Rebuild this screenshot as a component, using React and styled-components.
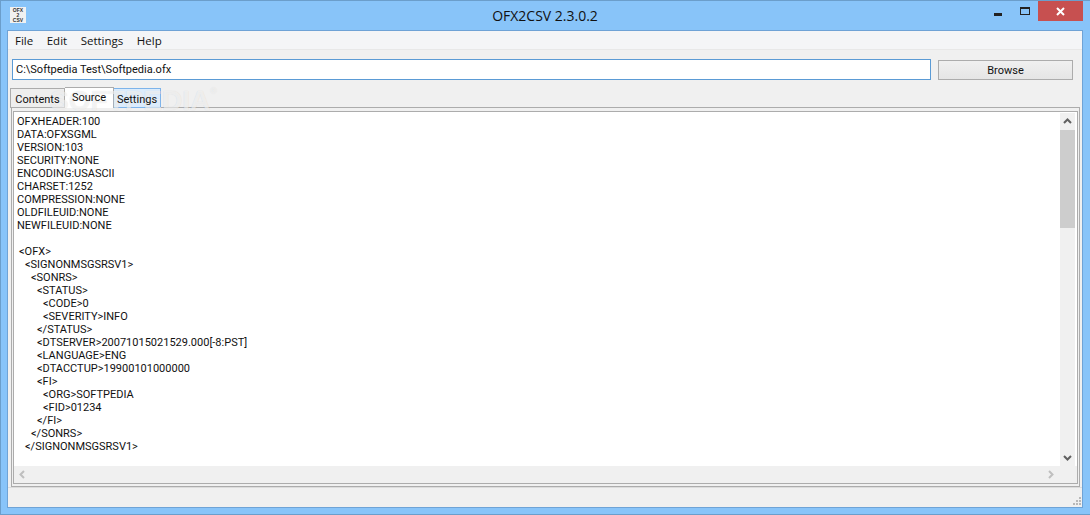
import styled, { createGlobalStyle } from "styled-components";

const GlobalStyle = createGlobalStyle`
  html, body {
    margin: 0;
    height: 100%;
    overflow: hidden;
  }
  * {
    box-sizing: border-box;
  }
`;

const Frame = styled.div`
  width: 1090px;
  height: 515px;
  display: flex;
  flex-direction: column;
  padding: 0 7px 6px 6px;
  background: #88c4f9;
  border: 1px solid #6b9ecb;
  border-right: 0;
`;

const TitleBar = styled.div`
  height: 29px;
  flex: none;
  display: grid;
  grid-template-columns: 1fr auto 1fr;
`;

const AppIcon = styled.div`
  width: 16px;
  height: 16px;
  margin: 6px 0 0 3px;
  background: #f1f1f1;
  font: bold 5px/5px "Liberation Sans", sans-serif;
  color: #333;
  text-align: center;
  padding-top: 1px;
`;

const Title = styled.div`
  font: 14px/29px "Open Sans", sans-serif;
  color: #111;
`;

const WindowControls = styled.div`
  display: flex;
  justify-content: flex-end;
  align-items: flex-start;
`;

const MinimizeButton = styled.div`
  width: 8px;
  height: 3px;
  margin: 12px 18px 0 0;
  background: #222;
`;

const MaximizeButton = styled.div`
  width: 10px;
  height: 8px;
  margin: 6px 8px 0 0;
  border: 1px solid #222;
  border-top-width: 2px;
`;

const CloseButton = styled.div`
  width: 45px;
  height: 20px;
  background: #c75050;
  display: flex;
  align-items: center;
  justify-content: center;
`;

const Client = styled.div`
  flex: 1;
  min-height: 0;
  display: flex;
  flex-direction: column;
  border: 1px solid #6fa3d6;
  background: #f0f0f0;
  font: 11px Roboto, sans-serif;
  color: #111;
  position: relative;
`;

const MenuBar = styled.div`
  height: 19px;
  flex: none;
  display: flex;
  gap: 13.5px;
  padding-left: 7px;
  background: #f4f5f7;
  border-bottom: 1px solid #e8e8e8;
  font: 11.5px/19px "Open Sans", sans-serif;
`;

const FileRow = styled.div`
  display: flex;
  margin: 9px 9px 0 4px;
  gap: 7px;
`;

const PathInput = styled.div`
  flex: 1;
  height: 21px;
  padding-left: 3px;
  background: #fff;
  border: 1px solid #5b9bd5;
  line-height: 19px;
`;

const BrowseButton = styled.div`
  width: 135px;
  height: 20px;
  margin-top: 1px;
  text-align: center;
  line-height: 19px;
  border: 1px solid #acacac;
  background: linear-gradient(#f0f0f0, #e5e5e5);
`;

const TabStrip = styled.div`
  display: flex;
  height: 21px;
  margin: 7px 0 -1px 2px;
  position: relative;
`;

const Tab = styled.div`
  width: ${props => props.$width}px;
  height: ${props => (props.$active ? 21 : 20)}px;
  margin-top: ${props => (props.$active ? 0 : 1)}px;
  padding-top: ${props => (props.$active ? 3 : 4)}px;
  text-align: center;
  border: 1px solid ${props => (props.$hover ? "#7eb4ea" : "#acacac")};
  border-left-width: ${props => (props.$active || props.$hover ? 0 : 1)}px;
  border-bottom-width: ${props => (props.$active ? 0 : 1)}px;
  background: ${props =>
    props.$active ? "#fff" : props.$hover ? "#dcecfc" : "#eeeeee"};
`;

const TabLabel = styled.span`
  position: relative;
  z-index: 3;
`;

const TabPanel = styled.div`
  flex: 1;
  min-height: 0;
  margin: 0 2px 0 3px;
  padding: 3px 1px 2px;
  border: 1px solid #acacac;
  background: #f0f0f0;
`;

const SourceBox = styled.div`
  height: 100%;
  display: grid;
  grid-template-columns: 1fr 17px;
  grid-template-rows: 1fr 17px;
  border: 1px solid #acacac;
  background: #fff;
`;

const SourceText = styled.div`
  overflow: hidden;
  padding: 3px 0 0 3px;
  background: #fff;
`;

const SourceLine = styled.div`
  height: 13px;
  padding-left: ${props => props.$indent}px;
  font: 11px/13px Roboto, sans-serif;
  white-space: pre;
`;

const VerticalBar = styled.div`
  display: flex;
  flex-direction: column;
  padding-top: 1px;
  background: #fff;
  border-right: 2px solid #fff;
`;

const ArrowCell = styled.div`
  flex: none;
  height: 17px;
  display: flex;
  align-items: center;
  justify-content: center;
  background: #f0f0f0;
`;

const Thumb = styled.div`
  flex: none;
  height: 98px;
  background: #cdcdcd;
`;

const Track = styled.div`
  flex: 1;
  background: #f0f0f0;
`;

const HorizontalBar = styled.div`
  display: flex;
  align-items: center;
  justify-content: space-between;
  padding: 0 5px 0 4px;
  background: #f0f0f0;
`;

const Corner = styled.div`
  background: #f0f0f0;
`;

const StatusBar = styled.div`
  height: 20px;
  flex: none;
  display: flex;
  justify-content: flex-end;
  align-items: flex-end;
  padding: 0 1px 2px 0;
  border-top: 1px solid #dcdcdc;
`;

const Watermark = styled.div`
  position: absolute;
  left: 42px;
  top: 54px;
  font: bold 28px "Liberation Sans", sans-serif;
  color: rgba(255, 255, 255, 0.6);
  text-shadow: 0 0 1px rgba(0, 0, 0, 0.12);
  z-index: 2;
  pointer-events: none;
`;

const WatermarkMark = styled.sup`
  font-size: 9px;
  font-weight: normal;
  vertical-align: 16px;
  line-height: 0;
`;

const sourceLines = [
  ["OFXHEADER:100", 0],
  ["DATA:OFXSGML", 0],
  ["VERSION:103", 0],
  ["SECURITY:NONE", 0],
  ["ENCODING:USASCII", 0],
  ["CHARSET:1252", 0],
  ["COMPRESSION:NONE", 0],
  ["OLDFILEUID:NONE", 0],
  ["NEWFILEUID:NONE", 0],
  ["", 0],
  ["<OFX>", 2],
  ["<SIGNONMSGSRSV1>", 8],
  ["<SONRS>", 14],
  ["<STATUS>", 20],
  ["<CODE>0", 26],
  ["<SEVERITY>INFO", 26],
  ["</STATUS>", 20],
  ["<DTSERVER>20071015021529.000[-8:PST]", 20],
  ["<LANGUAGE>ENG", 20],
  ["<DTACCTUP>19900101000000", 20],
  ["<FI>", 20],
  ["<ORG>SOFTPEDIA", 26],
  ["<FID>01234", 26],
  ["</FI>", 20],
  ["</SONRS>", 14],
  ["</SIGNONMSGSRSV1>", 8]
];

function Chevron({ direction, color }) {
  const points = {
    up: "1,6 4.5,2.5 8,6",
    down: "1,3 4.5,6.5 8,3",
    left: "6,1 2.5,4.5 6,8",
    right: "3,1 6.5,4.5 3,8"
  };

  return (
    <svg width="9" height="9" viewBox="0 0 9 9">
      <polyline
        points={points[direction]}
        fill="none"
        stroke={color}
        strokeWidth="2"
      />
    </svg>
  );
}

function Grip() {
  return (
    <svg width="8" height="8" viewBox="0 0 8 8" fill="#b8b8b8">
      <rect x="6" y="0" width="2" height="2" />
      <rect x="3" y="3" width="2" height="2" />
      <rect x="6" y="3" width="2" height="2" />
      <rect x="0" y="6" width="2" height="2" />
      <rect x="3" y="6" width="2" height="2" />
      <rect x="6" y="6" width="2" height="2" />
    </svg>
  );
}

function App() {
  return (
    <Frame>
      <GlobalStyle />
      <TitleBar>
        <AppIcon>
          OFX
          <br />2
          <br />
          CSV
        </AppIcon>
        <Title>OFX2CSV 2.3.0.2</Title>
        <WindowControls>
          <MinimizeButton />
          <MaximizeButton />
          <CloseButton>
            <svg width="9" height="9" viewBox="0 0 9 9">
              <path d="M1 1 8 8M8 1 1 8" stroke="#fff" strokeWidth="2" />
            </svg>
          </CloseButton>
        </WindowControls>
      </TitleBar>
      <Client>
        <MenuBar>
          <span>File</span>
          <span>Edit</span>
          <span>Settings</span>
          <span>Help</span>
        </MenuBar>
        <FileRow>
          <PathInput>C:\Softpedia Test\Softpedia.ofx</PathInput>
          <BrowseButton>Browse</BrowseButton>
        </FileRow>
        <TabStrip>
          <Tab $width={55}>
            <TabLabel>Contents</TabLabel>
          </Tab>
          <Tab $width={49} $active>
            <TabLabel>Source</TabLabel>
          </Tab>
          <Tab $width={47} $hover>
            <TabLabel>Settings</TabLabel>
          </Tab>
        </TabStrip>
        <Watermark>
          SOFTPEDIA<WatermarkMark>®</WatermarkMark>
        </Watermark>
        <TabPanel>
          <SourceBox>
            <SourceText>
              {sourceLines.map(([text, indent], index) => (
                <SourceLine key={index} $indent={indent}>
                  {text}
                </SourceLine>
              ))}
            </SourceText>
            <VerticalBar>
              <ArrowCell>
                <Chevron direction="up" color="#606060" />
              </ArrowCell>
              <Thumb />
              <Track />
              <ArrowCell>
                <Chevron direction="down" color="#606060" />
              </ArrowCell>
            </VerticalBar>
            <HorizontalBar>
              <Chevron direction="left" color="#bfbfbf" />
              <Chevron direction="right" color="#bfbfbf" />
            </HorizontalBar>
            <Corner />
          </SourceBox>
        </TabPanel>
        <StatusBar>
          <Grip />
        </StatusBar>
      </Client>
    </Frame>
  );
}

export default App;
